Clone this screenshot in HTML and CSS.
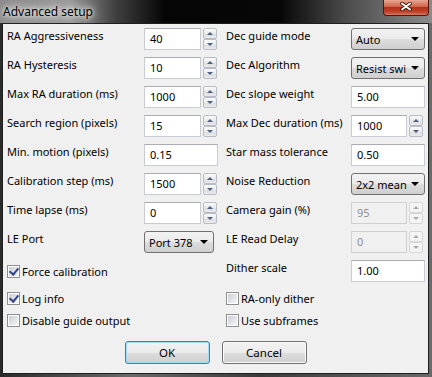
FILE: index.html
```html
<!DOCTYPE html>
<html lang="en">
<head>
  <meta charset="UTF-8">
  <title>Advanced setup</title>
  <link rel="stylesheet" href="styles.css">
</head>
<body>
<div class="window">
  <div class="titlebar">
    <span class="title">Advanced setup</span>
    <span class="close">
      <svg width="12" height="9" viewBox="0 0 12 9">
        <path d="M2 1.5 L10 7.5 M10 1.5 L2 7.5" stroke="#3b1208" stroke-width="3.6" stroke-linecap="round"/>
        <path d="M2 1.5 L10 7.5 M10 1.5 L2 7.5" stroke="#fff" stroke-width="2" stroke-linecap="round"/>
      </svg>
    </span>
  </div>
  <div class="content">
    <div class="grid">
      <!-- row 1 -->
      <label class="lbl">RA Aggressiveness</label>
      <div class="spin"><input class="edit" type="text" value="40"><span class="arrows"><span class="up"></span><span class="down"></span></span></div>
      <label class="lbl">Dec guide mode</label>
      <div class="combo"><span class="combo-text">Auto</span></div>

      <!-- row 2 -->
      <label class="lbl">RA Hysteresis</label>
      <div class="spin"><input class="edit" type="text" value="10"><span class="arrows"><span class="up"></span><span class="down"></span></span></div>
      <label class="lbl">Dec Algorithm</label>
      <div class="combo"><span class="combo-text">Resist swi</span></div>

      <!-- row 3 -->
      <label class="lbl">Max RA duration (ms)</label>
      <div class="spin"><input class="edit" type="text" value="1000"><span class="arrows"><span class="up"></span><span class="down"></span></span></div>
      <label class="lbl">Dec slope weight</label>
      <input class="edit wide" type="text" value="5.00">

      <!-- row 4 -->
      <label class="lbl">Search region (pixels)</label>
      <div class="spin"><input class="edit" type="text" value="15"><span class="arrows"><span class="up"></span><span class="down"></span></span></div>
      <label class="lbl">Max Dec duration (ms)</label>
      <div class="spin"><input class="edit narrow" type="text" value="1000"><span class="arrows"><span class="up"></span><span class="down"></span></span></div>

      <!-- row 5 -->
      <label class="lbl">Min. motion (pixels)</label>
      <input class="edit wide" type="text" value="0.15">
      <label class="lbl">Star mass tolerance</label>
      <input class="edit wide" type="text" value="0.50">

      <!-- row 6 -->
      <label class="lbl">Calibration step (ms)</label>
      <div class="spin"><input class="edit" type="text" value="1500"><span class="arrows"><span class="up"></span><span class="down"></span></span></div>
      <label class="lbl">Noise Reduction</label>
      <div class="combo"><span class="combo-text">2x2 mean</span></div>

      <!-- row 7 -->
      <label class="lbl">Time lapse (ms)</label>
      <div class="spin"><input class="edit" type="text" value="0"><span class="arrows"><span class="up"></span><span class="down"></span></span></div>
      <label class="lbl">Camera gain (%)</label>
      <div class="spin disabled"><input class="edit narrow" type="text" value="95" disabled><span class="arrows"><span class="up"></span><span class="down"></span></span></div>

      <!-- row 8 -->
      <label class="lbl">LE Port</label>
      <div class="combo short"><span class="combo-text">Port 378</span></div>
      <label class="lbl">LE Read Delay</label>
      <div class="spin disabled"><input class="edit narrow" type="text" value="0" disabled><span class="arrows"><span class="up"></span><span class="down"></span></span></div>

      <!-- row 9 -->
      <div class="check left"><span class="box on"></span>Force calibration</div>
      <label class="lbl">Dither scale</label>
      <input class="edit wide" type="text" value="1.00">

      <!-- row 10 -->
      <div class="check left"><span class="box on"></span>Log info</div>
      <div class="check right"><span class="box"></span>RA-only dither</div>

      <!-- row 11 -->
      <div class="check left"><span class="box"></span>Disable guide output</div>
      <div class="check right"><span class="box"></span>Use subframes</div>
    </div>

    <div class="buttons">
      <button class="btn default">OK</button>
      <button class="btn">Cancel</button>
    </div>
  </div>
</div>
</body>
</html>
```

FILE: styles.css
```css
* {
  box-sizing: border-box;
}
body {
  margin: 0;
  font-family: "Noto Sans", sans-serif;
  font-size: 11px;
  color: #000;
}
.window {
  width: 432px;
  height: 377px;
  display: flex;
  flex-direction: column;
  background: linear-gradient(90deg, #2a2a2a 0, #6a6a6a 30%, #3a3a3a 60%, #6a6a6a 100%);
}
.titlebar {
  position: relative;
  height: 23px;
  padding-left: 3px;
  display: flex;
  align-items: center;
  background: linear-gradient(90deg, #8a8a8a 0, #9a9a9a 70px, #404040 115px, #050505 165px, #070707 280px, #4a4a4a 345px, #8c8c8c 432px);
}
.title {
  font-size: 12px;
  color: #000;
  text-shadow: 0 0 4px #fff, 0 0 8px #fff, 0 0 12px #ddd;
}
.close {
  position: absolute;
  right: 3px;
  top: 0;
  width: 46px;
  height: 16px;
  border: 1px solid #4a1a10;
  border-top: none;
  border-radius: 0 0 4px 4px;
  background: linear-gradient(#e9a592 0, #d0644a 45%, #b3301a 50%, #c0432a 80%, #da7c60 100%);
  display: flex;
  align-items: center;
  justify-content: center;
  padding-bottom: 2px;
}
.content {
  flex: 1;
  margin: 0 3px 3px 2px;
  background: #f0f0f0;
  border: 1px solid #1e1e1e;
  padding: 4px 0 0 4px;
}
.grid {
  display: grid;
  grid-template-columns: 137px 82px 125px 74px;
  grid-template-rows: repeat(8, 29px) 27px 22px 22px;
  align-items: start;
}
.lbl {
  line-height: 16px;
  white-space: nowrap;
}
.edit {
  height: 22px;
  width: 57px;
  margin: 0;
  padding: 0 5px 1px;
  font: inherit;
  color: #000;
  background: #fff;
  border: 1px solid #c9cbd2;
  border-top-color: #abadb3;
  outline: none;
}
.edit.wide {
  width: 74px;
}
.edit.narrow {
  width: 56px;
}
.edit:disabled {
  background: #f0f0f0;
  border-color: #cfcfcf;
  color: #8f8f8f;
}
.spin {
  display: flex;
  gap: 2px;
}
.arrows {
  display: flex;
  flex-direction: column;
  width: 14px;
  height: 22px;
}
.arrows span {
  flex: 1;
  position: relative;
  border: 1px solid #b7bcc6;
  border-radius: 2px;
  background: linear-gradient(#fbfbfb, #e9e9ea 50%, #dcdcde 51%, #eaeaec);
}
.arrows span::after {
  content: "";
  position: absolute;
  left: 3px;
  top: 3px;
  border-left: 3px solid transparent;
  border-right: 3px solid transparent;
}
.arrows .up::after {
  border-bottom: 3px solid #4d6185;
}
.arrows .down::after {
  border-top: 3px solid #4d6185;
}
.disabled .arrows span {
  border-color: #d5d5d5;
  background: #f4f4f4;
}
.disabled .arrows .up::after {
  border-bottom-color: #a9a9a9;
}
.disabled .arrows .down::after {
  border-top-color: #a9a9a9;
}
.combo {
  position: relative;
  width: 74px;
  height: 22px;
  padding-left: 4px;
  border: 1px solid #707070;
  border-radius: 3px;
  background: linear-gradient(#f2f2f2, #ebebeb 50%, #dddddd 51%, #cfcfcf);
  display: flex;
  align-items: center;
}
.combo.short {
  width: 70px;
}
.combo-text {
  white-space: nowrap;
}
.combo::after {
  content: "";
  position: absolute;
  right: 5px;
  top: 8px;
  border-left: 4px solid transparent;
  border-right: 4px solid transparent;
  border-top: 4px solid #000;
}
.check {
  height: 22px;
  display: flex;
  align-items: center;
  gap: 2px;
  white-space: nowrap;
}
.check.left {
  grid-column: 1 / 3;
}
.check.right {
  grid-column: 3 / 5;
}
.box {
  position: relative;
  width: 13px;
  height: 13px;
  border: 1px solid #8e8f8f;
  background: #fff;
}
.box::before {
  content: "";
  position: absolute;
  inset: 1px;
  background: linear-gradient(135deg, #cbcfd5, #f6f6f6);
}
.box.on::after {
  content: "";
  position: absolute;
  left: 3px;
  top: 0px;
  width: 4px;
  height: 7px;
  border-right: 2px solid #36468e;
  border-bottom: 2px solid #36468e;
  transform: rotate(40deg);
}
.buttons {
  margin-top: 10px;
  margin-left: -4px;
  display: flex;
  justify-content: center;
  gap: 12px;
}
.btn {
  width: 85px;
  height: 23px;
  font: inherit;
  font-size: 11.5px;
  color: #000;
  border: 1px solid #707070;
  border-radius: 3px;
  background: linear-gradient(#f2f2f2, #ebebeb 50%, #dddddd 51%, #cfcfcf);
  box-shadow: inset 0 0 0 1px #fbfbfb;
}
.btn.default {
  border-color: #3c7fb1;
  box-shadow: inset 0 0 0 1px #9fdcf6;
}
```
